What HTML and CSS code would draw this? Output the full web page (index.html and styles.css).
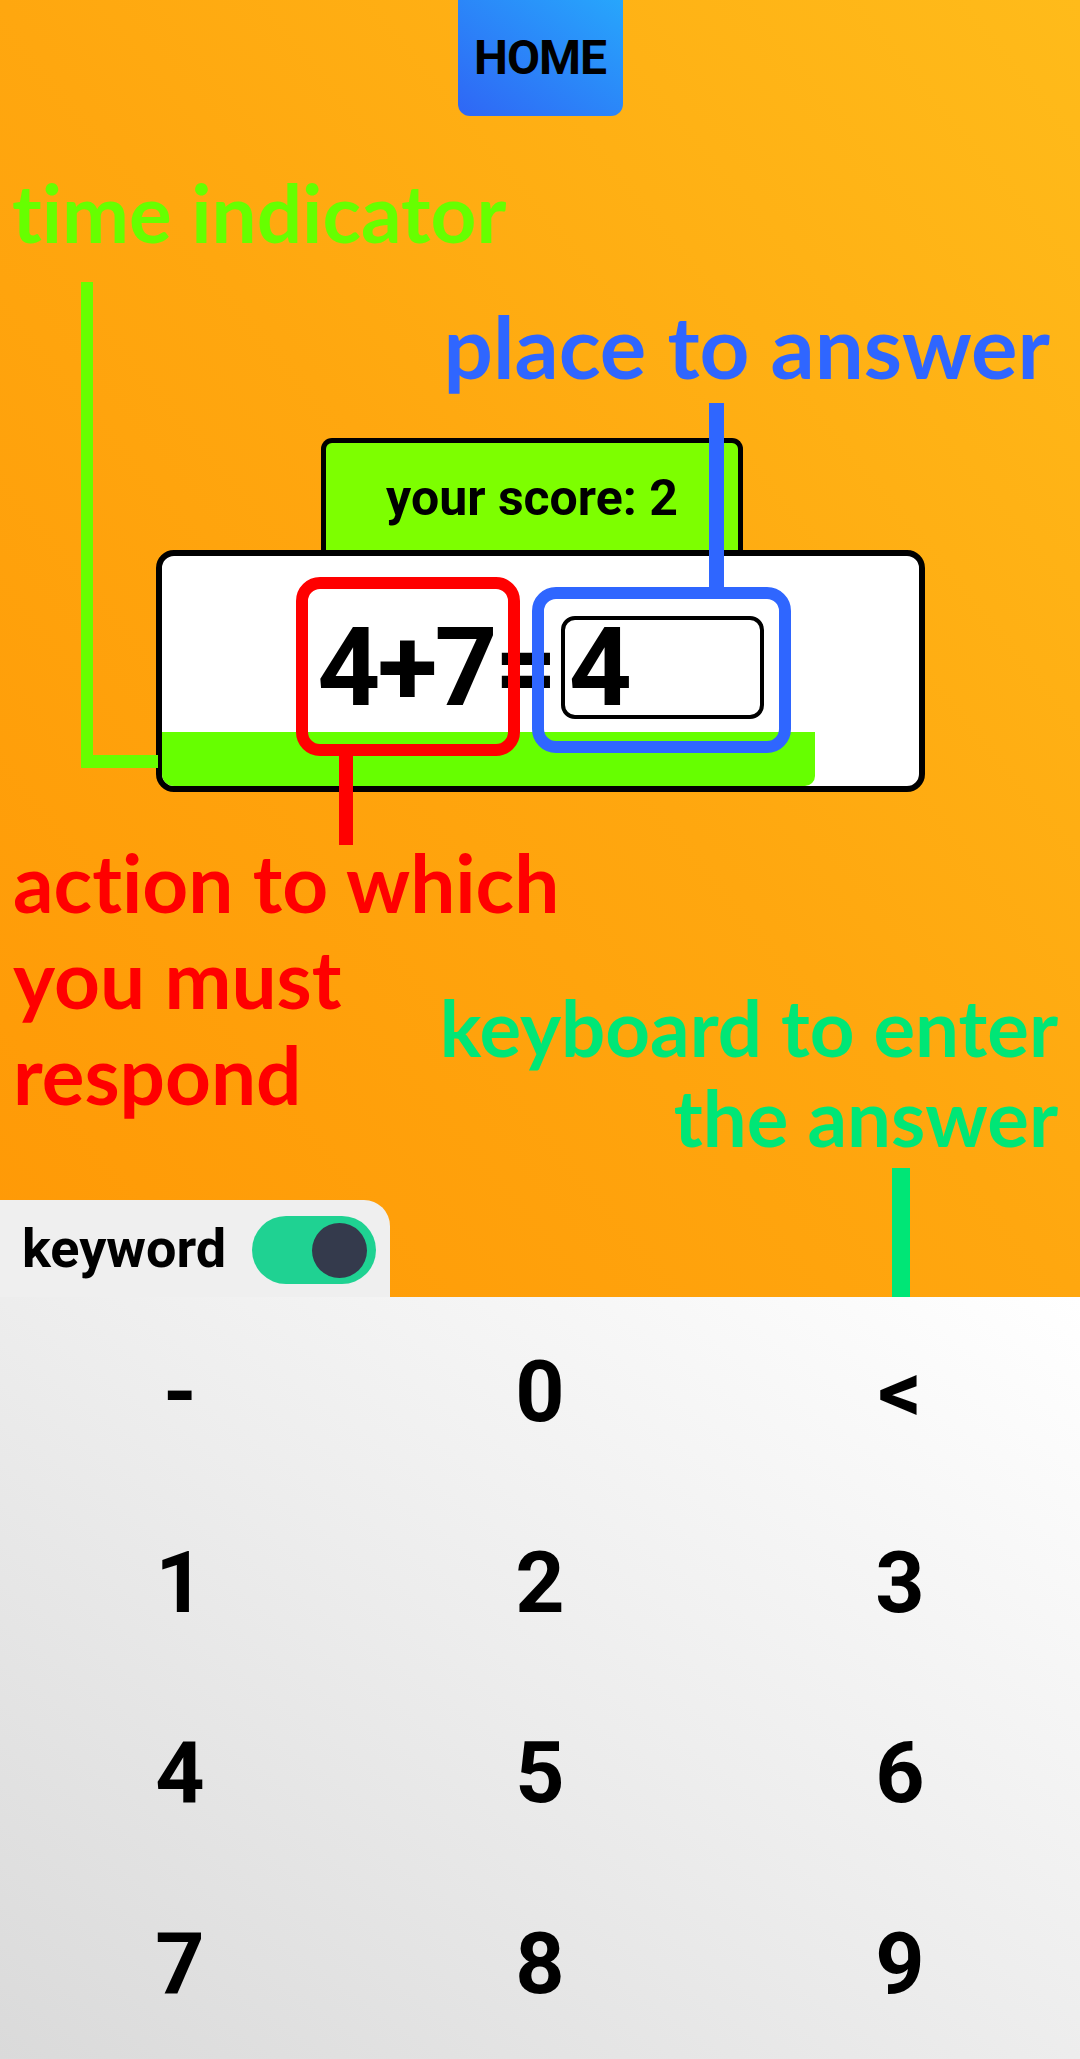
FILE: index.html
```html
<!DOCTYPE html>
<html lang="en">
<head>
<meta charset="utf-8">
<title>Math game</title>
<link rel="stylesheet" href="styles.css">
</head>
<body>
<div class="page">
  <div class="stage">
    <header class="top">
      <div class="home">HOME</div>
    </header>
    <main class="game">
      <div class="score">your score: 2</div>
      <div class="card">
        <div class="eq">
          <span class="expr">4+7=</span>
          <div class="answer">4</div>
        </div>
        <div class="timebar"></div>
      </div>
    </main>
    <div class="tabrow">
      <div class="kwtab">
        <span class="kwlabel">keyword</span>
        <div class="toggle"><span class="knob"></span></div>
      </div>
    </div>
  </div>
  <div class="keypad">
    <div class="key">-</div>
    <div class="key">0</div>
    <div class="key">&lt;</div>
    <div class="key">1</div>
    <div class="key">2</div>
    <div class="key">3</div>
    <div class="key">4</div>
    <div class="key">5</div>
    <div class="key">6</div>
    <div class="key">7</div>
    <div class="key">8</div>
    <div class="key">9</div>
  </div>

  <div class="note note-time">time indicator</div>
  <div class="line line-time"></div>

  <div class="note note-place">place to answer</div>
  <div class="line line-place"></div>
  <div class="frame frame-place"></div>

  <div class="frame frame-action"></div>
  <div class="line line-action"></div>
  <div class="note note-action">action to which<br>you must<br>respond</div>

  <div class="note note-keys">keyboard to enter<br>the answer</div>
  <div class="line line-keys"></div>
</div>
</body>
</html>
```

FILE: styles.css
```css
* { box-sizing: border-box; }

html, body {
  margin: 0;
  padding: 0;
}

body {
  width: 1080px;
  height: 2059px;
  overflow: hidden;
  font-family: Roboto, "Liberation Sans", sans-serif;
}

.page {
  position: relative;
  width: 1080px;
  height: 2059px;
}

/* ---------- upper orange area ---------- */
.stage {
  height: 1297px;
  display: flex;
  flex-direction: column;
  background: linear-gradient(to top right, #ff9906 0%, #ffa70f 50%, #ffbb1a 100%);
}

.top {
  display: flex;
  justify-content: center;
  height: 116px;
}

.home {
  width: 165px;
  height: 116px;
  border-radius: 0 0 12px 12px;
  background: linear-gradient(to top right, #2f66f5, #27a6fc);
  display: flex;
  align-items: center;
  justify-content: center;
  font-family: Roboto, sans-serif;
  font-weight: 700;
  font-size: 48px;
  letter-spacing: -1px;
  color: #000;
  line-height: 1;
}

.game {
  margin-top: 322px;
  display: flex;
  flex-direction: column;
}

.score {
  margin-left: 321px;
  width: 422px;
  height: 112px;
  border: 5px solid #000;
  border-bottom: none;
  border-radius: 11px 11px 0 0;
  background: #7dff00;
  display: flex;
  align-items: center;
  justify-content: center;
  padding-top: 2px;
  font-weight: 700;
  font-size: 50px;
  color: #000;
}

.card {
  margin-left: 156px;
  width: 769px;
  height: 242px;
  border: 6px solid #000;
  border-radius: 18px;
  background: #fff;
  overflow: hidden;
  display: flex;
  flex-direction: column;
}

.eq {
  height: 176px;
  padding: 60px 0 13px;
  display: flex;
  align-items: center;
  justify-content: center;
  gap: 6px;
}

.expr {
  font-weight: 700;
  font-size: 110px;
  letter-spacing: -3px;
  line-height: 1;
  color: #000;
}

.answer {
  width: 203px;
  height: 103px;
  border: 4px solid #000;
  border-radius: 14px;
  display: flex;
  align-items: center;
  padding-left: 4px;
  font-weight: 700;
  font-size: 110px;
  line-height: 1;
  color: #000;
}

.timebar {
  width: 653px;
  height: 54px;
  background: #66ff00;
  border-radius: 0 0 10px 0;
}

.tabrow {
  margin-top: auto;
  height: 97px;
  display: flex;
}

.kwtab {
  width: 390px;
  height: 97px;
  background: #efefef;
  border-radius: 0 26px 0 0;
  display: flex;
  align-items: center;
  padding-left: 22px;
  gap: 26px;
}

.kwlabel {
  font-weight: 700;
  font-size: 54px;
  color: #000;
  line-height: 1;
}

.toggle {
  width: 124px;
  height: 68px;
  border-radius: 34px;
  background: #1fd292;
  display: flex;
  align-items: center;
  justify-content: flex-end;
  padding-right: 9px;
  margin-top: 3px;
}

.knob {
  width: 55px;
  height: 55px;
  border-radius: 50%;
  background: #343a4c;
}

/* ---------- keypad ---------- */
.keypad {
  height: 762px;
  display: grid;
  grid-template-columns: repeat(3, 1fr);
  grid-template-rows: repeat(4, 1fr);
  background: linear-gradient(to top right, #dadada 0%, #ededed 50%, #ffffff 100%);
}

.key {
  display: flex;
  align-items: center;
  justify-content: center;
  font-weight: 700;
  font-size: 86px;
  line-height: 1;
  color: #000;
}

/* ---------- annotation overlay ---------- */
.note {
  position: absolute;
  font-family: Lato, "Open Sans", sans-serif;
  font-weight: 700;
  white-space: nowrap;
  font-variant-ligatures: none;
  font-feature-settings: "liga" 0, "clig" 0;
}

.note-time {
  left: 12px;
  top: 164px;
  font-size: 80px;
  line-height: 96px;
  color: #66ff00;
}

.note-place {
  right: 30px;
  top: 295px;
  font-size: 87px;
  line-height: 102px;
  color: #2f66ff;
}

.note-action {
  left: 13px;
  top: 834px;
  font-size: 80px;
  line-height: 96px;
  color: #ff0000;
}

.note-keys {
  right: 22px;
  top: 982px;
  font-size: 78px;
  line-height: 90px;
  color: #00e676;
  text-align: right;
}

.line {
  position: absolute;
}

.line-time {
  left: 81px;
  top: 282px;
  width: 77px;
  height: 486px;
  border-left: 12px solid #66ff00;
  border-bottom: 13px solid #66ff00;
}

.line-place {
  left: 709px;
  top: 403px;
  width: 15px;
  height: 186px;
  background: #2f66ff;
}

.line-action {
  left: 339px;
  top: 754px;
  width: 14px;
  height: 91px;
  background: #ff0000;
}

.line-keys {
  left: 892px;
  top: 1168px;
  width: 18px;
  height: 129px;
  background: #00e676;
}

.frame {
  position: absolute;
  border-radius: 24px;
}

.frame-action {
  left: 296px;
  top: 577px;
  width: 224px;
  height: 179px;
  border: 12px solid #ff0000;
}

.frame-place {
  left: 532px;
  top: 587px;
  width: 259px;
  height: 166px;
  border: 12px solid #2f66ff;
}
```
